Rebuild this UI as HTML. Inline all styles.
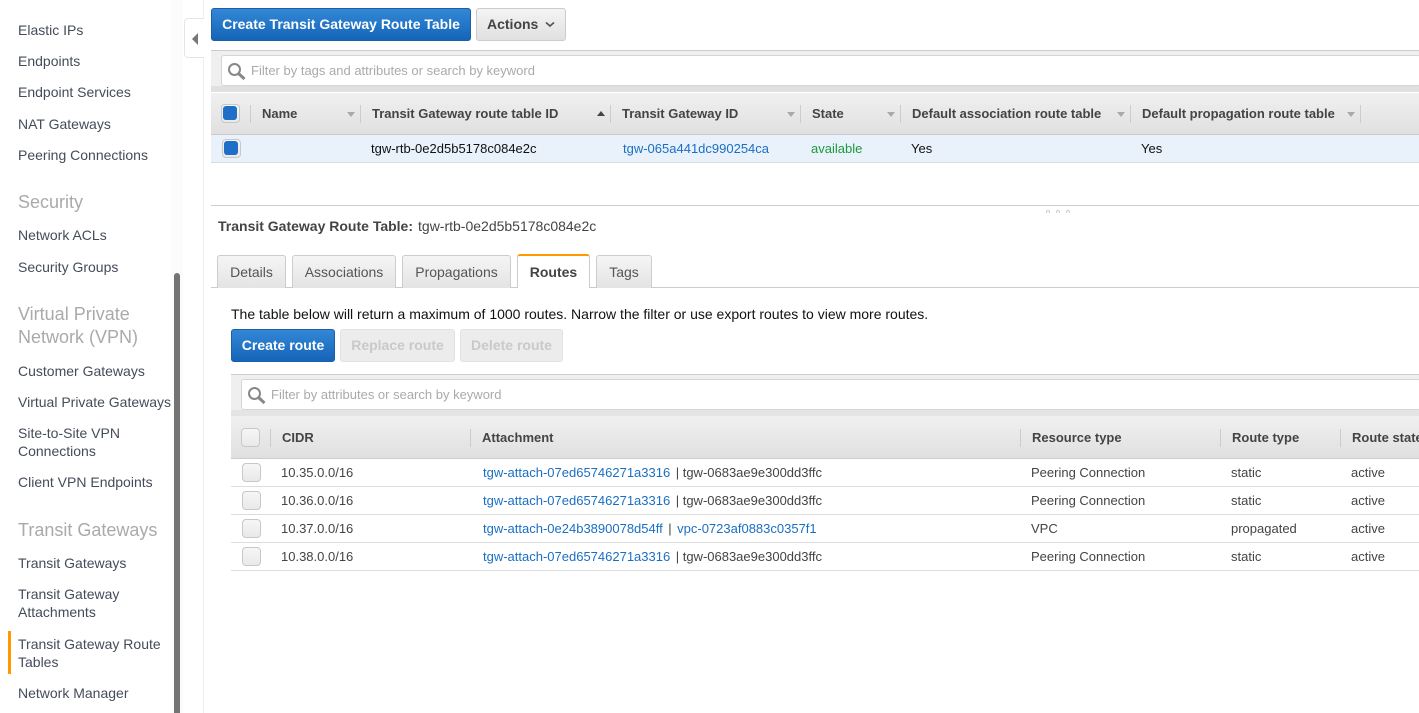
<!DOCTYPE html>
<html><head><meta charset="utf-8"><style>
html,body{margin:0;padding:0;background:#fff;width:1419px;height:713px;overflow:hidden}
body{position:relative;font-family:"Liberation Sans",sans-serif;font-size:14px;color:#444}
.a,.t,.s,.h,.c{position:absolute}
.t,.s,.h,.c{white-space:nowrap}
.s{left:18px;line-height:18px;color:#444c5a}
.s.g{font-size:18px;line-height:23px;color:#aaa}
.h{font-size:13px;font-weight:bold;color:#444;line-height:16px}
.c{font-size:13px;line-height:16px;color:#444}
.l{color:#1a6fc4}
.k{color:#111}
.p{margin-left:5.5px}
.btn{position:absolute;box-sizing:border-box;border-radius:3px;font-weight:bold;text-align:center;font-size:14px}
.bl{background:linear-gradient(#3387d6,#1565b8);border:1px solid #1a5fa8;color:#fff}
.gr{background:linear-gradient(#f4f4f4,#e0e0e0);border:1px solid #ccc;color:#444}
.dis{background:#ececec;border:1px solid #e2e2e2;color:#c9c9c9}
.tab{position:absolute;top:255px;height:33px;box-sizing:border-box;background:linear-gradient(#f5f5f5,#e4e4e4);border:1px solid #ccc;border-bottom:0;border-radius:3px 3px 0 0;text-align:center;line-height:33px;color:#555}
.sep{position:absolute;width:1px;background:#ccc}
.cb{position:absolute;box-sizing:border-box;width:19px;height:19px;border:1px solid #c8c8c8;border-radius:4px;background:linear-gradient(#f6f6f6,#e9e9e9)}
.cb i{position:absolute;left:1px;top:1px;width:14px;height:14px;border-radius:3px;background:#1f6fc8}
.dn{position:absolute;width:0;height:0;border-left:4px solid transparent;border-right:4px solid transparent;border-top:5px solid #aaa}
.line{position:absolute;height:1px;background:#ddd}
</style></head><body>

<div class="a" style="left:171px;top:0;width:12px;height:713px;background:#fcfcfc"></div>
<div class="a" style="left:174px;top:273px;width:6px;height:440px;background:#747474;border-radius:3px 3px 0 0"></div>
<div class="a" style="left:203px;top:0;width:1px;height:713px;background:#eee"></div>
<div class="a" style="left:184px;top:18px;width:20px;height:40px;box-sizing:border-box;background:#fff;border:1px solid #e5e5e5;border-right:0;border-radius:4px 0 0 4px"></div>
<div class="a" style="left:192px;top:33px;border-top:6px solid transparent;border-bottom:6px solid transparent;border-right:6px solid #777"></div>

<div class="s" style="top:21px">Elastic IPs</div>
<div class="s" style="top:52px">Endpoints</div>
<div class="s" style="top:83px">Endpoint Services</div>
<div class="s" style="top:115px">NAT Gateways</div>
<div class="s" style="top:146px">Peering Connections</div>
<div class="s g" style="top:191px">Security</div>
<div class="s" style="top:226px">Network ACLs</div>
<div class="s" style="top:258px">Security Groups</div>
<div class="s g" style="top:303px">Virtual Private</div>
<div class="s g" style="top:326px">Network (VPN)</div>
<div class="s" style="top:362px">Customer Gateways</div>
<div class="s" style="top:393px">Virtual Private Gateways</div>
<div class="s" style="top:424px">Site-to-Site VPN</div>
<div class="s" style="top:442px">Connections</div>
<div class="s" style="top:473px">Client VPN Endpoints</div>
<div class="s g" style="top:519px">Transit Gateways</div>
<div class="s" style="top:554px">Transit Gateways</div>
<div class="s" style="top:585px">Transit Gateway</div>
<div class="s" style="top:603px">Attachments</div>
<div class="a" style="left:8px;top:631px;width:3px;height:43px;background:#f90"></div>
<div class="s" style="top:635px">Transit Gateway Route</div>
<div class="s" style="top:653px">Tables</div>
<div class="s" style="top:684px">Network Manager</div>

<div class="btn bl" style="left:211px;top:8px;width:260px;height:33px;line-height:31px">Create Transit Gateway Route Table</div>
<div class="btn gr" style="left:476px;top:8px;width:90px;height:33px;line-height:31px;text-align:left;padding-left:10px">Actions</div>
<svg class="a" style="left:545px;top:21px" width="10" height="7"><path d="M1 1.5L5 5L9 1.5" fill="none" stroke="#555" stroke-width="1.7"/></svg>

<div class="a" style="left:211px;top:50px;width:1208px;height:85px;background:#efefef;border-top:1px solid #ccc;box-sizing:border-box"></div>
<div class="a" style="left:221px;top:55px;width:1200px;height:31px;box-sizing:border-box;background:#fff;border:1px solid #d5d5d5;border-radius:3px"></div>
<svg class="a" style="left:227px;top:62px" width="20" height="19"><circle cx="7.5" cy="7.5" r="5.5" fill="none" stroke="#888" stroke-width="2"/><path d="M11.5 11.5L17.5 17" stroke="#888" stroke-width="3"/></svg>
<div class="t" style="left:251px;top:63px;font-size:13px;line-height:16px;color:#aaa">Filter by tags and attributes or search by keyword</div>

<div class="a" style="left:211px;top:86px;width:1208px;height:6px;background:#e0e0e0"></div>
<div class="a" style="left:211px;top:92px;width:1208px;height:43px;box-sizing:border-box;background:linear-gradient(#f0f0f0,#e0e0e0);border-top:1px solid #fff;border-bottom:1px solid #ccc"></div>
<div class="cb" style="left:221px;top:104px"><i></i></div>
<div class="sep" style="left:250px;top:105px;height:18px"></div>
<div class="sep" style="left:360px;top:105px;height:18px"></div>
<div class="sep" style="left:610px;top:105px;height:18px"></div>
<div class="sep" style="left:800px;top:105px;height:18px"></div>
<div class="sep" style="left:900px;top:105px;height:18px"></div>
<div class="sep" style="left:1130px;top:105px;height:18px"></div>
<div class="sep" style="left:1360px;top:105px;height:18px"></div>
<div class="h" style="left:262px;top:106px">Name</div>
<div class="h" style="left:372px;top:106px">Transit Gateway route table ID</div>
<div class="h" style="left:622px;top:106px">Transit Gateway ID</div>
<div class="h" style="left:812px;top:106px">State</div>
<div class="h" style="left:912px;top:106px">Default association route table</div>
<div class="h" style="left:1142px;top:106px">Default propagation route table</div>
<div class="dn" style="left:347px;top:112px"></div>
<div class="a" style="left:597px;top:111px;border-left:4px solid transparent;border-right:4px solid transparent;border-bottom:5px solid #444"></div>
<div class="dn" style="left:787px;top:112px"></div>
<div class="dn" style="left:887px;top:112px"></div>
<div class="dn" style="left:1117px;top:112px"></div>
<div class="dn" style="left:1347px;top:112px"></div>

<div class="a" style="left:211px;top:135px;width:1208px;height:28px;box-sizing:border-box;background:#e9f1fb;border-bottom:1px solid #ddd"></div>
<div class="cb" style="left:222px;top:139px"><i></i></div>
<div class="c k" style="left:371px;top:141px">tgw-rtb-0e2d5b5178c084e2c</div>
<div class="c l" style="left:623px;top:141px">tgw-065a441dc990254ca</div>
<div class="c" style="left:811px;top:141px;color:#1d9a3c">available</div>
<div class="c k" style="left:911px;top:141px">Yes</div>
<div class="c k" style="left:1141px;top:141px">Yes</div>

<div class="a" style="left:211px;top:205px;width:1208px;height:1px;background:#ccc"></div>
<div class="a" style="left:1046px;top:210px;width:4px;height:3px;border:1px solid #ccc;border-bottom:0;border-radius:3px 3px 0 0;box-sizing:border-box"></div>
<div class="a" style="left:1056px;top:210px;width:4px;height:3px;border:1px solid #ccc;border-bottom:0;border-radius:3px 3px 0 0;box-sizing:border-box"></div>
<div class="a" style="left:1066px;top:210px;width:4px;height:3px;border:1px solid #ccc;border-bottom:0;border-radius:3px 3px 0 0;box-sizing:border-box"></div>
<div class="t" style="left:218px;top:218px;line-height:16px"><b>Transit Gateway Route Table:</b><span style="margin-left:5px">tgw-rtb-0e2d5b5178c084e2c</span></div>

<div class="a" style="left:211px;top:287px;width:1208px;height:1px;background:#ccc"></div>
<div class="tab" style="left:217px;width:69px">Details</div>
<div class="tab" style="left:292px;width:104px">Associations</div>
<div class="tab" style="left:402px;width:109px">Propagations</div>
<div class="tab" style="left:517px;width:73px;height:34px;background:#fff;border-top:2px solid #f90;font-weight:bold;color:#444;line-height:32px;top:254px">Routes</div>
<div class="tab" style="left:596px;width:56px">Tags</div>

<div class="t" style="left:231px;top:306px;line-height:16px;color:#111">The table below will return a maximum of 1000 routes. Narrow the filter or use export routes to view more routes.</div>
<div class="btn bl" style="left:231px;top:329px;width:104px;height:33px;line-height:31px">Create route</div>
<div class="btn dis" style="left:340px;top:329px;width:115px;height:33px;line-height:31px">Replace route</div>
<div class="btn dis" style="left:460px;top:329px;width:103px;height:33px;line-height:31px">Delete route</div>

<div class="a" style="left:231px;top:374px;width:1188px;height:36px;box-sizing:border-box;background:#efefef;border-top:1px solid #ccc"></div>
<div class="a" style="left:231px;top:410px;width:1188px;height:6px;background:#e4e4e4"></div>
<div class="a" style="left:241px;top:379px;width:1180px;height:31px;box-sizing:border-box;background:#fff;border:1px solid #d5d5d5;border-radius:3px"></div>
<svg class="a" style="left:247px;top:386px" width="20" height="19"><circle cx="7.5" cy="7.5" r="5.5" fill="none" stroke="#888" stroke-width="2"/><path d="M11.5 11.5L17.5 17" stroke="#888" stroke-width="3"/></svg>
<div class="t" style="left:271px;top:387px;font-size:13px;line-height:16px;color:#aaa">Filter by attributes or search by keyword</div>

<div class="a" style="left:231px;top:416px;width:1188px;height:43px;box-sizing:border-box;background:linear-gradient(#f0f0f0,#e0e0e0);border-bottom:1px solid #ccc"></div>
<div class="cb" style="left:241px;top:428px"></div>
<div class="sep" style="left:270px;top:429px;height:18px"></div>
<div class="sep" style="left:470px;top:429px;height:18px"></div>
<div class="sep" style="left:1020px;top:429px;height:18px"></div>
<div class="sep" style="left:1220px;top:429px;height:18px"></div>
<div class="sep" style="left:1340px;top:429px;height:18px"></div>
<div class="h" style="left:282px;top:430px">CIDR</div>
<div class="h" style="left:482px;top:430px">Attachment</div>
<div class="h" style="left:1032px;top:430px">Resource type</div>
<div class="h" style="left:1232px;top:430px">Route type</div>
<div class="h" style="left:1352px;top:430px">Route state</div>

<div class="line" style="left:231px;top:486px;width:1188px"></div>
<div class="line" style="left:231px;top:514px;width:1188px"></div>
<div class="line" style="left:231px;top:542px;width:1188px"></div>
<div class="line" style="left:231px;top:570px;width:1188px"></div>

<div class="cb" style="left:242px;top:463px"></div>
<div class="c" style="left:281px;top:465px">10.35.0.0/16</div>
<div class="c" style="left:483px;top:465px"><span class="l">tgw-attach-07ed65746271a3316</span><span class="p">| tgw-0683ae9e300dd3ffc</span></div>
<div class="c" style="left:1031px;top:465px">Peering Connection</div>
<div class="c" style="left:1231px;top:465px">static</div>
<div class="c" style="left:1351px;top:465px">active</div>

<div class="cb" style="left:242px;top:491px"></div>
<div class="c" style="left:281px;top:493px">10.36.0.0/16</div>
<div class="c" style="left:483px;top:493px"><span class="l">tgw-attach-07ed65746271a3316</span><span class="p">| tgw-0683ae9e300dd3ffc</span></div>
<div class="c" style="left:1031px;top:493px">Peering Connection</div>
<div class="c" style="left:1231px;top:493px">static</div>
<div class="c" style="left:1351px;top:493px">active</div>

<div class="cb" style="left:242px;top:519px"></div>
<div class="c" style="left:281px;top:521px">10.37.0.0/16</div>
<div class="c" style="left:483px;top:521px"><span class="l">tgw-attach-0e24b3890078d54ff</span><span class="p">|</span><span class="l" style="margin-left:5.5px">vpc-0723af0883c0357f1</span></div>
<div class="c" style="left:1031px;top:521px">VPC</div>
<div class="c" style="left:1231px;top:521px">propagated</div>
<div class="c" style="left:1351px;top:521px">active</div>

<div class="cb" style="left:242px;top:547px"></div>
<div class="c" style="left:281px;top:549px">10.38.0.0/16</div>
<div class="c" style="left:483px;top:549px"><span class="l">tgw-attach-07ed65746271a3316</span><span class="p">| tgw-0683ae9e300dd3ffc</span></div>
<div class="c" style="left:1031px;top:549px">Peering Connection</div>
<div class="c" style="left:1231px;top:549px">static</div>
<div class="c" style="left:1351px;top:549px">active</div>

</body></html>
